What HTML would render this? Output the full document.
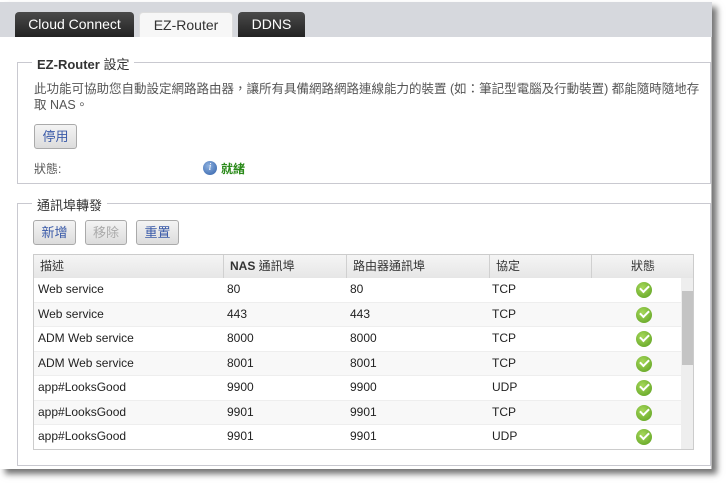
<!DOCTYPE html>
<html><head><meta charset="utf-8"><style>
*{margin:0;padding:0;box-sizing:border-box}
body{width:728px;height:490px;background:#fff;font-family:"Liberation Sans","Noto Sans CJK TC",sans-serif;font-size:12px;color:#333;position:relative;overflow:hidden}
.page{position:absolute;left:0;top:2px;width:712px;height:467px;background:#fff;box-shadow:5px 5px 6px rgba(0,0,0,.55);border-right:1px solid #bbb}
.bar{position:absolute;left:0;top:0;width:712px;height:35px;background:#d6d8dd}
.tab{position:absolute;top:10px;height:25px;border-radius:4px 4px 0 0;font-size:14px;text-align:center;line-height:25px}
.dark{background:linear-gradient(#4a4a4a,#222);color:#fff}
.light{background:#f7f7f7;color:#333;border:1px solid #ddd;border-bottom:none}
.fs{position:absolute;border:1px solid #c9c9d0}
.lg{position:absolute;top:-9px;background:#fff;padding:0 5px;font-size:13px;color:#333}
.btn{position:absolute;height:25px;border:1px solid #aaa;border-radius:3px;background:linear-gradient(#f4f4f4,#dcdcdc);color:#3a5aa8;font-size:13px;text-align:center;line-height:23px}
.t{position:absolute;left:33px;top:252px;width:661px;height:196px;border:1px solid #ccc;overflow:hidden}
.hd{position:absolute;top:0;height:23px;background:linear-gradient(#f5f5f5,#e6e6e6);border-right:1px solid #d0d0d0;line-height:23px;font-size:12px;padding-left:6px}
.row{position:absolute;left:0;width:647px;height:24.5px;line-height:23px;font-size:12px;color:#222;border-bottom:1px solid #eee}
.row span{position:absolute}
.ck{position:absolute;left:602px;top:4px;width:16px;height:16px;border-radius:50%;background:radial-gradient(circle at 40% 35%,#a6d85a,#5a9e1f)}
.ck:after{content:"";position:absolute;left:4px;top:3px;width:7px;height:4px;border-left:2px solid #fff;border-bottom:2px solid #fff;transform:rotate(-45deg)}
</style></head><body>
<div class="page">
<div class="bar"></div>
<div class="tab dark" style="left:15px;width:119px">Cloud Connect</div>
<div class="tab light" style="left:139px;width:94px">EZ-Router</div>
<div class="tab dark" style="left:238px;width:67px">DDNS</div>

<div class="fs" style="left:17px;top:60px;width:694px;height:122px">
<div class="lg" style="left:14px"><b>EZ-Router</b> 設定</div>
<div style="position:absolute;left:16px;top:18px;white-space:nowrap;font-size:12.5px;line-height:16px;color:#555">此功能可協助您自動設定網路路由器，讓所有具備網路網路連線能力的裝置 (如：筆記型電腦及行動裝置) 都能隨時隨地存<br>取 NAS。</div>
<div class="btn" style="left:16px;top:61px;width:43px">停用</div>
<div style="position:absolute;left:16px;top:97px;color:#555">狀態:</div>
<div style="position:absolute;left:185px;top:98px;width:14px;height:14px;border-radius:50%;background:radial-gradient(circle at 40% 35%,#8fb2e0,#2f5fa8);color:#fff;font-size:10px;font-style:italic;text-align:center;line-height:14px;font-family:'Liberation Serif',serif">i</div>
<div style="position:absolute;left:203px;top:97px;color:#2b8a1a;font-weight:bold">就緒</div>
</div>

<div class="fs" style="left:17px;top:201px;width:694px;height:263px">
<div class="lg" style="left:14px">通訊埠轉發</div>
</div>
<div class="btn" style="left:33px;top:218px;width:43px">新增</div>
<div class="btn" style="left:85px;top:218px;width:42px;color:#aaa">移除</div>
<div class="btn" style="left:136px;top:218px;width:43px">重置</div>

<div class="t">
<div class="hd" style="left:0;width:190px">描述</div>
<div class="hd" style="left:190px;width:123px"><b>NAS</b> 通訊埠</div>
<div class="hd" style="left:313px;width:143px">路由器通訊埠</div>
<div class="hd" style="left:456px;width:102px">協定</div>
<div class="hd" style="left:558px;width:103px;text-align:center;padding:0">狀態</div>
<div style="position:absolute;left:647px;top:23px;width:14px;height:173px;background:#eee"></div>
<div style="position:absolute;left:648px;top:36px;width:12px;height:74px;background:#c4c4c4"></div>
<div class="row" style="top:23px;background:#fff"><span style="left:4px">Web service</span><span style="left:193px">80</span><span style="left:316px">80</span><span style="left:458px">TCP</span><div class="ck"></div></div>
<div class="row" style="top:47.5px;background:#f8f8f8"><span style="left:4px">Web service</span><span style="left:193px">443</span><span style="left:316px">443</span><span style="left:458px">TCP</span><div class="ck"></div></div>
<div class="row" style="top:72px;background:#fff"><span style="left:4px">ADM Web service</span><span style="left:193px">8000</span><span style="left:316px">8000</span><span style="left:458px">TCP</span><div class="ck"></div></div>
<div class="row" style="top:96.5px;background:#f8f8f8"><span style="left:4px">ADM Web service</span><span style="left:193px">8001</span><span style="left:316px">8001</span><span style="left:458px">TCP</span><div class="ck"></div></div>
<div class="row" style="top:121px;background:#fff"><span style="left:4px">app#LooksGood</span><span style="left:193px">9900</span><span style="left:316px">9900</span><span style="left:458px">UDP</span><div class="ck"></div></div>
<div class="row" style="top:145.5px;background:#f8f8f8"><span style="left:4px">app#LooksGood</span><span style="left:193px">9901</span><span style="left:316px">9901</span><span style="left:458px">TCP</span><div class="ck"></div></div>
<div class="row" style="top:170px;background:#fff"><span style="left:4px">app#LooksGood</span><span style="left:193px">9901</span><span style="left:316px">9901</span><span style="left:458px">UDP</span><div class="ck"></div></div>
</div>
</div>
</body></html>
